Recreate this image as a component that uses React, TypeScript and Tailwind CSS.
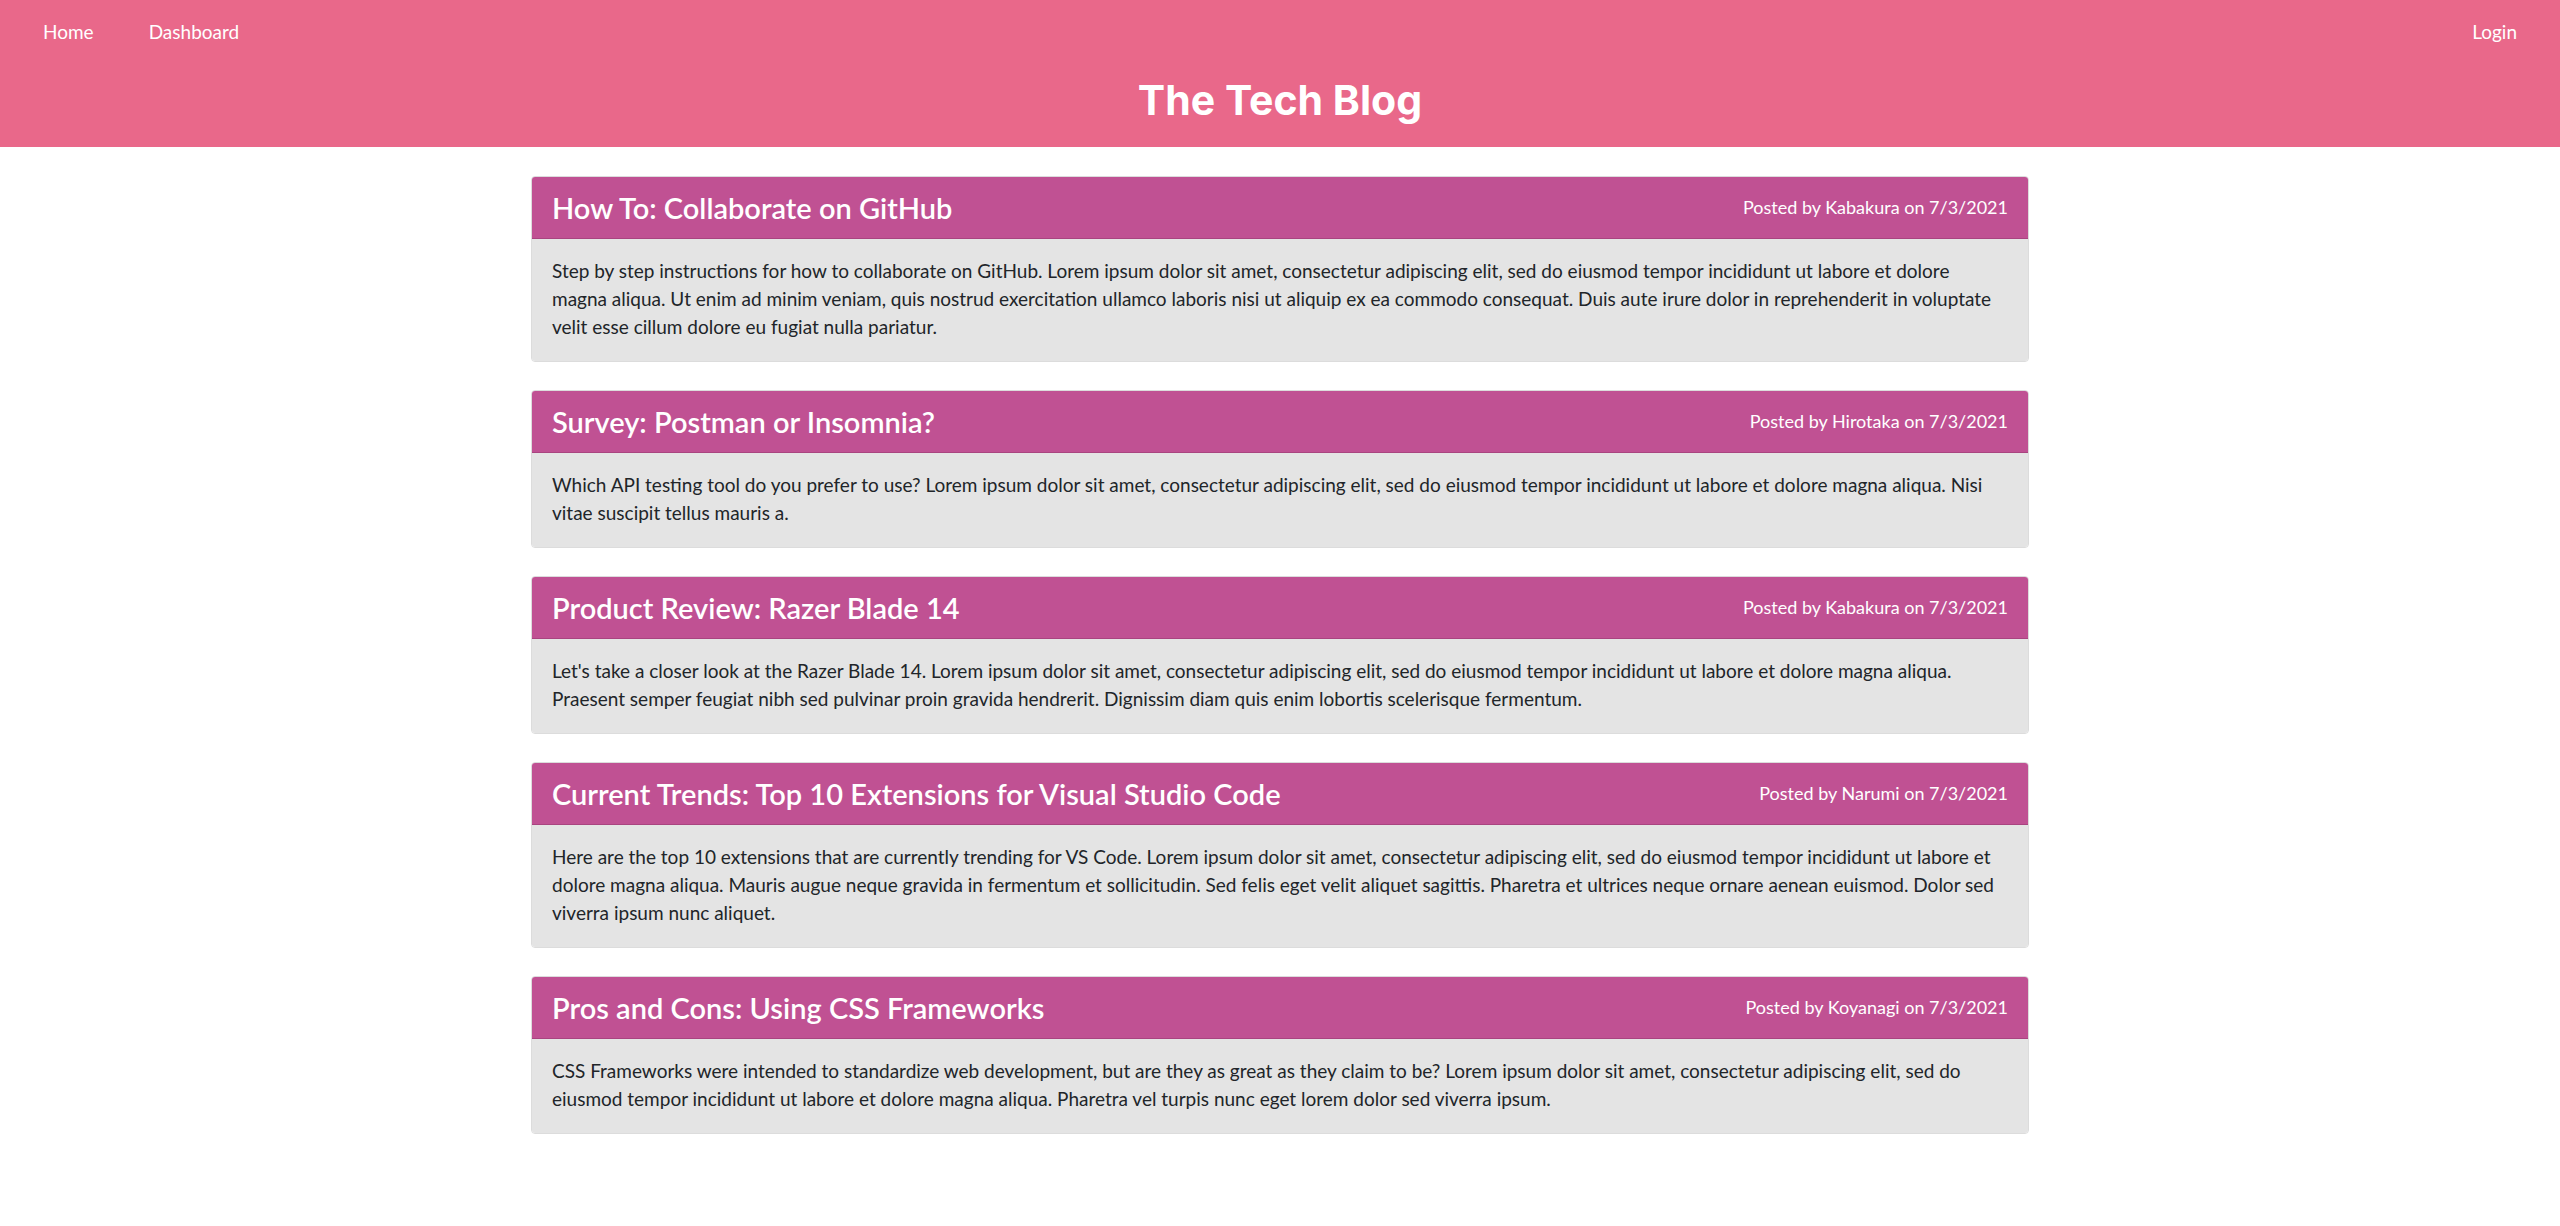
const posts = [
  {
    title: "How To: Collaborate on GitHub",
    author: "Kabakura",
    date: "7/3/2021",
    body: "Step by step instructions for how to collaborate on GitHub. Lorem ipsum dolor sit amet, consectetur adipiscing elit, sed do eiusmod tempor incididunt ut labore et dolore magna aliqua. Ut enim ad minim veniam, quis nostrud exercitation ullamco laboris nisi ut aliquip ex ea commodo consequat. Duis aute irure dolor in reprehenderit in voluptate velit esse cillum dolore eu fugiat nulla pariatur.",
  },
  {
    title: "Survey: Postman or Insomnia?",
    author: "Hirotaka",
    date: "7/3/2021",
    body: "Which API testing tool do you prefer to use? Lorem ipsum dolor sit amet, consectetur adipiscing elit, sed do eiusmod tempor incididunt ut labore et dolore magna aliqua. Nisi vitae suscipit tellus mauris a.",
  },
  {
    title: "Product Review: Razer Blade 14",
    author: "Kabakura",
    date: "7/3/2021",
    body: "Let's take a closer look at the Razer Blade 14. Lorem ipsum dolor sit amet, consectetur adipiscing elit, sed do eiusmod tempor incididunt ut labore et dolore magna aliqua. Praesent semper feugiat nibh sed pulvinar proin gravida hendrerit. Dignissim diam quis enim lobortis scelerisque fermentum.",
  },
  {
    title: "Current Trends: Top 10 Extensions for Visual Studio Code",
    author: "Narumi",
    date: "7/3/2021",
    body: "Here are the top 10 extensions that are currently trending for VS Code. Lorem ipsum dolor sit amet, consectetur adipiscing elit, sed do eiusmod tempor incididunt ut labore et dolore magna aliqua. Mauris augue neque gravida in fermentum et sollicitudin. Sed felis eget velit aliquet sagittis. Pharetra et ultrices neque ornare aenean euismod. Dolor sed viverra ipsum nunc aliquet.",
  },
  {
    title: "Pros and Cons: Using CSS Frameworks",
    author: "Koyanagi",
    date: "7/3/2021",
    body: "CSS Frameworks were intended to standardize web development, but are they as great as they claim to be? Lorem ipsum dolor sit amet, consectetur adipiscing elit, sed do eiusmod tempor incididunt ut labore et dolore magna aliqua. Pharetra vel turpis nunc eget lorem dolor sed viverra ipsum.",
  },
];

const App = () => {
  return (
    <div className="min-h-screen bg-white font-['Lato',sans-serif]">
      {/* Header */}
      <header className="bg-[#e9688a] h-[147px] flex flex-col">
        <nav className="flex justify-between items-center px-[43px] pt-[18px] text-white text-[19px]">
          <div className="flex gap-[55px]">
            <a href="#">Home</a>
            <a href="#">Dashboard</a>
          </div>
          <a href="#">Login</a>
        </nav>
        <h1 className="text-center text-white font-bold text-[41px] leading-[50px] font-['Inter',sans-serif] mt-[28px]">
          The Tech Blog
        </h1>
      </header>

      {/* Posts */}
      <main className="max-w-[1498px] mx-auto pt-[29px] pb-10 flex flex-col gap-[28px]">
        {posts.map((post) => (
          <article
            key={post.title}
            className="rounded-[4px] border border-[#dcdcdc] overflow-hidden"
          >
            <div className="bg-[#c05193] h-[62px] px-5 flex items-center justify-between border-b border-[#a94480] text-white">
              <h2 className="text-[29px] font-semibold">{post.title}</h2>
              <span className="text-[18px]">
                Posted by {post.author} on {post.date}
              </span>
            </div>
            <div className="bg-[#e4e4e4] px-5 pt-[18px] pb-[20px] text-[19px] leading-[28px] text-[#212529]">
              {post.body}
            </div>
          </article>
        ))}
      </main>
    </div>
  );
};

export default App;
